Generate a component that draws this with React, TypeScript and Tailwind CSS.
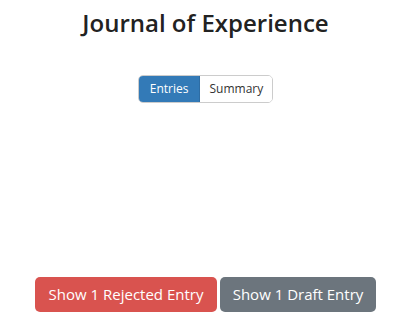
export default function App() {
  return (
    <div
      className="w-[405px] h-[326px] bg-white pl-[6px] flex flex-col items-center text-[#222]"
      style={{ fontFamily: '"Open Sans", Lato, sans-serif' }}
    >
      <h1 className="mt-[8px] text-[24px] leading-[30px] font-semibold">
        Journal of Experience
      </h1>

      <div className="mt-[37px] flex rounded-[5px] border border-[#ccc] overflow-hidden text-[12px] leading-none">
        <button
          type="button"
          className="h-[26px] px-[11px] bg-[#337ab7] text-white border-r border-[#2e6da4]"
        >
          Entries
        </button>
        <button type="button" className="h-[26px] px-[9px] bg-white text-[#333]">
          Summary
        </button>
      </div>

      <div className="flex-1" />

      <div className="mb-[14px] flex gap-[3px] text-[15px] text-white">
        <button
          type="button"
          className="w-[182px] h-[35px] rounded-[5px] bg-[#d9534f]"
        >
          Show 1 Rejected Entry
        </button>
        <button
          type="button"
          className="w-[156px] h-[35px] rounded-[5px] bg-[#6c757d]"
        >
          Show 1 Draft Entry
        </button>
      </div>
    </div>
  );
}
